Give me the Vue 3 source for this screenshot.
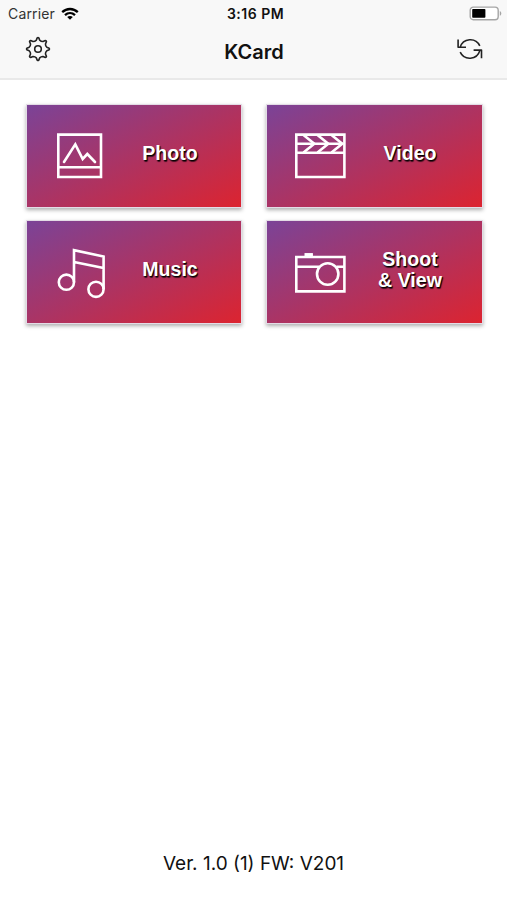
<script setup>
const tiles = [
  { id: 'photo', lines: ['Photo'] },
  { id: 'video', lines: ['Video'] },
  { id: 'music', lines: ['Music'] },
  { id: 'shoot', lines: ['Shoot', '& View'] },
]

// Outline of the eight-toothed settings gear, centred on 0,0
const polar = (r, deg) => {
  const a = ((deg - 90) * Math.PI) / 180
  return `${(r * Math.cos(a)).toFixed(2)} ${(r * Math.sin(a)).toFixed(2)}`
}
let gear = `M${polar(11.2, -4)}`
for (let i = 0; i < 8; i++) {
  const a = i * 45
  gear += `Q${polar(11.8, a)} ${polar(11.2, a + 4)}L${polar(9, a + 11)}`
  gear += `Q${polar(8, a + 22.5)} ${polar(9, a + 34)}L${polar(11.2, a + 41)}`
}
gear += 'Z'
</script>

<template>
  <div class="screen">
    <header class="top">
      <div class="status">
        <div class="carrier">
          <span>Carrier</span>
          <svg class="wifi" width="18" height="14" viewBox="0 0 18 14">
            <path d="M1.2 5.2C5.7.9 12.3.9 16.8 5.2M4 8.2c2.9-2.7 7.1-2.7 10 0" />
            <path class="solid" d="M9 12.7 6.2 10c1.6-1.4 4-1.4 5.6 0z" />
          </svg>
        </div>
        <span class="time">3:16 PM</span>
        <svg class="battery" width="34" height="16" viewBox="0 0 34 16">
          <rect class="shell" x="1.2" y="1.1" width="28" height="12.6" rx="3.2" />
          <rect class="level" x="3.2" y="3" width="13.2" height="8.8" rx=".8" />
          <path class="cap" d="M30.8 5c2 .8 2 4 0 4.8z" />
        </svg>
      </div>
      <nav class="nav">
        <svg class="line" width="28" height="28" viewBox="-14 -14 28 28">
          <path :d="gear" />
          <circle r="3.3" />
        </svg>
        <h1>KCard</h1>
        <svg class="line" width="28" height="28" viewBox="0 0 28 28">
          <path d="M4.2 12.3A10.5 10.5 0 0 1 23.8 10.8M2.1 4.4V12.3H10" />
          <path d="M23.8 15.6A10.5 10.5 0 0 1 4.2 17.2M17.6 15.1H25.5V23.3" />
        </svg>
      </nav>
    </header>

    <main class="tiles">
      <button v-for="tile in tiles" :key="tile.id" class="tile">
        <svg class="icon" width="56" height="56" viewBox="0 0 56 56">
          <template v-if="tile.id === 'photo'">
            <path d="M6.3 6.6H49V49H6.3zM6.3 39.3H49" />
            <path class="round" d="M12 34 23.3 16.3 30.7 31 35.3 26 43 34" />
          </template>
          <template v-else-if="tile.id === 'video'">
            <path d="M4.3 6.6H52.4V49H4.3zM4.3 24.7H52.4M4.3 15.8H51" />
            <path d="M11.5 7 22.3 15.8 11.5 24.6M25.5 7 36.3 15.8 25.5 24.6M39.5 7 50.3 15.8 39.5 24.6" />
          </template>
          <template v-else-if="tile.id === 'music'">
            <path d="M22 38.3V6.2L51.6 12.5V45.3M22 17.9 51.6 24" />
            <circle cx="14.4" cy="38.2" r="7.6" />
            <circle cx="44" cy="45.3" r="7.6" />
          </template>
          <template v-else>
            <path d="M4.3 13H52.4V47.4H4.3zM4.3 22.7H27M44.5 22.7H52.4" />
            <rect class="solid" x="13" y="9.6" width="7.4" height="2.5" />
            <circle cx="35.7" cy="30" r="10.7" />
          </template>
        </svg>
        <span class="label">
          <span v-for="line in tile.lines" :key="line">{{ line }}</span>
        </span>
      </button>
    </main>

    <footer>Ver. 1.0 (1) FW: V201</footer>
  </div>
</template>

<style>
body {
  background: #fff;
}
</style>

<style scoped>
.screen {
  width: 507px;
  height: 900px;
  display: flex;
  flex-direction: column;
  background: #fff;
  color: #111;
  font-family: Inter, "Liberation Sans", sans-serif;
  overflow: hidden;
}
.top {
  box-sizing: border-box;
  height: 80px;
  background: #f8f8f8;
  border-bottom: 2px solid #e9e9e9;
}
.status {
  display: grid;
  grid-template-columns: 1fr auto 1fr;
  align-items: center;
  height: 27px;
  padding: 0 4px 0 8px;
  font-size: 14px;
}
.carrier {
  display: flex;
  align-items: center;
  gap: 6px;
  color: #333;
  letter-spacing: 0.15px;
}
.wifi {
  fill: none;
  stroke: #000;
  stroke-width: 2.3;
}
.wifi .solid {
  fill: #000;
  stroke: none;
}
.time {
  font-weight: 600;
  letter-spacing: 0.5px;
}
.battery {
  justify-self: end;
}
.shell {
  fill: #fff;
  stroke: #a5a5a5;
  stroke-width: 1.4;
}
.level {
  fill: #000;
}
.cap {
  fill: #a5a5a5;
}
.nav {
  display: grid;
  grid-template-columns: 28px 1fr 28px;
  align-items: center;
  height: 44px;
  padding: 0 23px 0 24px;
}
.nav h1 {
  margin: 6px 0 0;
  font-size: 20px;
  line-height: 24px;
  font-weight: 600;
  text-align: center;
}
.line {
  fill: none;
  stroke: #222;
  stroke-width: 1.6;
  stroke-linejoin: round;
}
.tiles {
  display: grid;
  grid-template-columns: 216px 217px;
  grid-auto-rows: 104px;
  gap: 12px 24px;
  padding: 24px 0 0 26px;
}
.tile {
  box-sizing: border-box;
  display: grid;
  grid-template-columns: 56px 110px;
  align-items: center;
  column-gap: 7px;
  margin: 0;
  padding: 0 0 0 25px;
  border: 1px solid #e3dce6;
  background: linear-gradient(153deg, #7b4397 0%, #dc2430 100%) padding-box;
  box-shadow: 0 2px 4px rgba(0, 0, 0, 0.32);
}
.icon {
  fill: none;
  stroke: #fff;
  stroke-width: 2.6;
}
.icon .round {
  stroke-linecap: round;
}
.icon .solid {
  fill: #fff;
  stroke-width: 1;
}
.label {
  display: grid;
  padding-bottom: 5px;
  color: #fff;
  font: bold 19.6px/21px "Liberation Sans", sans-serif;
  text-align: center;
  text-shadow: 1px 1px 1px #000, 1px 2px 1px rgba(0, 0, 0, 0.6);
}
footer {
  margin-top: auto;
  padding-bottom: 24px;
  text-align: center;
  font-size: 19px;
  line-height: 24px;
}
</style>
